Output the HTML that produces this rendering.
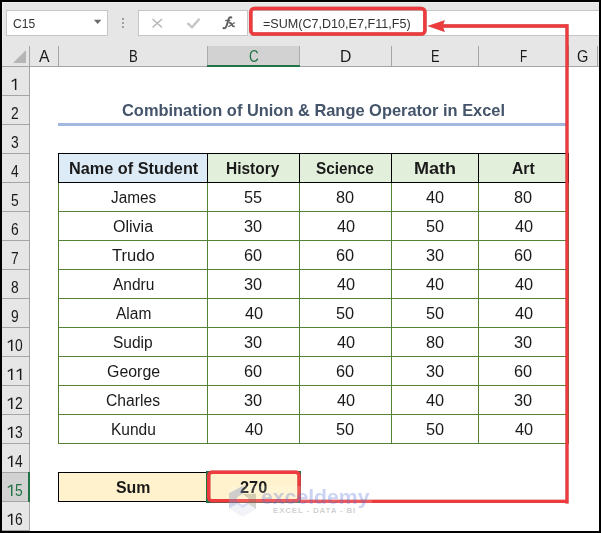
<!DOCTYPE html>
<html><head><meta charset="utf-8"><style>
html,body{margin:0;padding:0;background:#000;}
body{width:601px;height:533px;position:relative;overflow:hidden;}
</style></head><body>
<div style="position:absolute;left:0px;top:0px;width:601px;height:533px;background:#000;"></div>
<div style="position:absolute;left:2px;top:2px;width:597px;height:529px;background:#e6e6e6;"></div>
<div style="position:absolute;left:2px;top:2px;width:597px;height:1px;background:#efefef;"></div>
<div style="position:absolute;left:2px;top:2px;width:1px;height:529px;background:#efefef;"></div>
<div style="position:absolute;left:6px;top:10px;width:102px;height:26px;background:#fff;box-sizing:border-box;border:1px solid #c6c6c6"></div>
<div style="position:absolute;left:12.68px;top:4.00px;height:40px;line-height:40px;font-family:'Liberation Sans', sans-serif;font-size:13.5px;font-weight:normal;color:#333;white-space:nowrap;transform:scaleX(0.8935);transform-origin:0 0;">C15</div>
<svg style="position:absolute;left:0;top:0" width="120" height="40" viewBox="0 0 120 40"><path d="M93.9 19.8 L101.4 19.8 L97.65 24 Z" fill="#6a6a6a"/></svg>
<div style="position:absolute;left:122px;top:18px;width:2px;height:2px;background:#a0a0a0;"></div>
<div style="position:absolute;left:122px;top:22px;width:2px;height:2px;background:#a0a0a0;"></div>
<div style="position:absolute;left:122px;top:26px;width:2px;height:2px;background:#a0a0a0;"></div>
<div style="position:absolute;left:138px;top:10px;width:110px;height:26px;background:#fff;box-sizing:border-box;border:1px solid #c6c6c6"></div>
<svg style="position:absolute;left:0;top:0" width="601" height="40" viewBox="0 0 601 40"><path d="M152.5 19 L162 27.5 M162 19 L152.5 27.5" stroke="#b8b8b8" stroke-width="1.6" fill="none"/><path d="M187.5 23.2 L192 27.3 L199.5 18.8" stroke="#c6c6c6" stroke-width="2.4" fill="none" stroke-linejoin="miter"/><path d="M223.4 28.1 C224.7 28.7 225.9 27.9 226.5 26 L228.7 18.8 C229.2 17.5 230.2 17.1 231.4 17.5" stroke="#5e5e5e" stroke-width="1.9" fill="none" stroke-linecap="round"/><path d="M225.2 20.5 L230.4 20.5" stroke="#5e5e5e" stroke-width="1.3" fill="none"/><path d="M228.6 22.9 C230.5 22.3 231.5 23.5 232 25 C232.5 26.4 233.5 26.7 234.7 26.3" stroke="#5e5e5e" stroke-width="1.7" fill="none"/><path d="M234.9 22.6 L228.4 26.7" stroke="#5e5e5e" stroke-width="1.2" fill="none"/></svg>
<div style="position:absolute;left:250px;top:10px;width:349px;height:26px;background:#fff;box-sizing:border-box;border-top:1px solid #c6c6c6;border-bottom:1px solid #c6c6c6"></div>
<div style="position:absolute;left:262.68px;top:4.00px;height:40px;line-height:40px;font-family:'Liberation Sans', sans-serif;font-size:12.8px;font-weight:normal;color:#333;white-space:nowrap;transform:scaleX(0.9826);transform-origin:0 0;">=SUM(C7,D10,E7,F11,F5)</div>
<div style="position:absolute;left:2px;top:46px;width:597px;height:20px;background:#e6e6e6;"></div>
<div style="position:absolute;left:2px;top:66px;width:597px;height:1px;background:#a5a5a5;"></div>
<svg style="position:absolute;left:13px;top:50px" width="13" height="13" viewBox="0 0 13 13"><path d="M13 0 L13 13 L0 13 Z" fill="#b5b5b5"/></svg>
<div style="position:absolute;left:29px;top:46px;width:1px;height:485px;background:#a5a5a5;"></div>
<div style="position:absolute;left:207px;top:46px;width:93px;height:20px;background:#d2d2d2;"></div>
<div style="position:absolute;left:58px;top:46px;width:1px;height:20px;background:#a5a5a5;"></div>
<div style="position:absolute;left:207px;top:46px;width:1px;height:20px;background:#a5a5a5;"></div>
<div style="position:absolute;left:299px;top:46px;width:1px;height:20px;background:#a5a5a5;"></div>
<div style="position:absolute;left:391px;top:46px;width:1px;height:20px;background:#a5a5a5;"></div>
<div style="position:absolute;left:478px;top:46px;width:1px;height:20px;background:#a5a5a5;"></div>
<div style="position:absolute;left:568px;top:46px;width:1px;height:20px;background:#a5a5a5;"></div>
<div style="position:absolute;left:597px;top:46px;width:1px;height:20px;background:#a5a5a5;"></div>
<div style="position:absolute;left:207px;top:46px;width:1px;height:20px;background:#ababab;"></div>
<div style="position:absolute;left:299px;top:46px;width:1px;height:20px;background:#ababab;"></div>
<div style="position:absolute;left:207px;top:65px;width:93px;height:2px;background:#217346;"></div>
<div style="position:absolute;left:38.72px;top:36.00px;height:40px;line-height:40px;font-family:'Liberation Sans', sans-serif;font-size:16.3px;font-weight:normal;color:#1a1a1a;white-space:nowrap;transform:scaleX(0.9716);transform-origin:0 0;">A</div>
<div style="position:absolute;left:129.12px;top:36.00px;height:40px;line-height:40px;font-family:'Liberation Sans', sans-serif;font-size:16.3px;font-weight:normal;color:#1a1a1a;white-space:nowrap;transform:scaleX(0.8072);transform-origin:0 0;">B</div>
<div style="position:absolute;left:248.82px;top:36.00px;height:40px;line-height:40px;font-family:'Liberation Sans', sans-serif;font-size:16.3px;font-weight:normal;color:#217346;white-space:nowrap;transform:scaleX(0.8238);transform-origin:0 0;">C</div>
<div style="position:absolute;left:339.91px;top:36.00px;height:40px;line-height:40px;font-family:'Liberation Sans', sans-serif;font-size:16.3px;font-weight:normal;color:#1a1a1a;white-space:nowrap;transform:scaleX(0.9638);transform-origin:0 0;">D</div>
<div style="position:absolute;left:430.94px;top:36.00px;height:40px;line-height:40px;font-family:'Liberation Sans', sans-serif;font-size:16.3px;font-weight:normal;color:#1a1a1a;white-space:nowrap;transform:scaleX(0.7923);transform-origin:0 0;">E</div>
<div style="position:absolute;left:519.79px;top:36.00px;height:40px;line-height:40px;font-family:'Liberation Sans', sans-serif;font-size:16.3px;font-weight:normal;color:#1a1a1a;white-space:nowrap;transform:scaleX(0.7214);transform-origin:0 0;">F</div>
<div style="position:absolute;left:577.27px;top:36.00px;height:40px;line-height:40px;font-family:'Liberation Sans', sans-serif;font-size:16.3px;font-weight:normal;color:#1a1a1a;white-space:nowrap;transform:scaleX(0.8925);transform-origin:0 0;">G</div>
<div style="position:absolute;left:2px;top:67px;width:27px;height:464px;background:#e6e6e6;"></div>
<div style="position:absolute;left:2px;top:95px;width:27px;height:1px;background:#a5a5a5;"></div>
<div style="position:absolute;left:2px;top:124px;width:27px;height:1px;background:#a5a5a5;"></div>
<div style="position:absolute;left:2px;top:153px;width:27px;height:1px;background:#a5a5a5;"></div>
<div style="position:absolute;left:2px;top:182px;width:27px;height:1px;background:#a5a5a5;"></div>
<div style="position:absolute;left:2px;top:211px;width:27px;height:1px;background:#a5a5a5;"></div>
<div style="position:absolute;left:2px;top:240px;width:27px;height:1px;background:#a5a5a5;"></div>
<div style="position:absolute;left:2px;top:269px;width:27px;height:1px;background:#a5a5a5;"></div>
<div style="position:absolute;left:2px;top:298px;width:27px;height:1px;background:#a5a5a5;"></div>
<div style="position:absolute;left:2px;top:327px;width:27px;height:1px;background:#a5a5a5;"></div>
<div style="position:absolute;left:2px;top:356px;width:27px;height:1px;background:#a5a5a5;"></div>
<div style="position:absolute;left:2px;top:385px;width:27px;height:1px;background:#a5a5a5;"></div>
<div style="position:absolute;left:2px;top:414px;width:27px;height:1px;background:#a5a5a5;"></div>
<div style="position:absolute;left:2px;top:443px;width:27px;height:1px;background:#a5a5a5;"></div>
<div style="position:absolute;left:2px;top:472px;width:27px;height:1px;background:#a5a5a5;"></div>
<div style="position:absolute;left:2px;top:501px;width:27px;height:1px;background:#a5a5a5;"></div>
<div style="position:absolute;left:2px;top:530px;width:27px;height:1px;background:#a5a5a5;"></div>
<div style="position:absolute;left:2px;top:473px;width:27px;height:28px;background:#d2d2d2;"></div>
<div style="position:absolute;left:28px;top:472px;width:2px;height:30px;background:#217346;"></div>
<svg style="position:absolute;left:0;top:76px" width="30" height="16" viewBox="0 76 30 16"><rect x="14.90" y="78.70" width="1.45" height="11.3" fill="#1a1a1a"/><path d="M15.30 79.20 L11.70 81.60" stroke="#1a1a1a" stroke-width="1.25" fill="none"/></svg>
<div style="position:absolute;left:11.35px;top:93.00px;height:40px;line-height:40px;font-family:'Liberation Sans', sans-serif;font-size:16.3px;font-weight:normal;color:#1a1a1a;white-space:nowrap;transform:scaleX(0.8500);transform-origin:0 0;">2</div>
<div style="position:absolute;left:11.39px;top:122.00px;height:40px;line-height:40px;font-family:'Liberation Sans', sans-serif;font-size:16.3px;font-weight:normal;color:#1a1a1a;white-space:nowrap;transform:scaleX(0.8500);transform-origin:0 0;">3</div>
<div style="position:absolute;left:11.39px;top:151.00px;height:40px;line-height:40px;font-family:'Liberation Sans', sans-serif;font-size:16.3px;font-weight:normal;color:#1a1a1a;white-space:nowrap;transform:scaleX(0.8500);transform-origin:0 0;">4</div>
<div style="position:absolute;left:11.36px;top:180.00px;height:40px;line-height:40px;font-family:'Liberation Sans', sans-serif;font-size:16.3px;font-weight:normal;color:#1a1a1a;white-space:nowrap;transform:scaleX(0.8500);transform-origin:0 0;">5</div>
<div style="position:absolute;left:11.30px;top:209.00px;height:40px;line-height:40px;font-family:'Liberation Sans', sans-serif;font-size:16.3px;font-weight:normal;color:#1a1a1a;white-space:nowrap;transform:scaleX(0.8500);transform-origin:0 0;">6</div>
<div style="position:absolute;left:11.34px;top:238.00px;height:40px;line-height:40px;font-family:'Liberation Sans', sans-serif;font-size:16.3px;font-weight:normal;color:#1a1a1a;white-space:nowrap;transform:scaleX(0.8500);transform-origin:0 0;">7</div>
<div style="position:absolute;left:11.35px;top:267.00px;height:40px;line-height:40px;font-family:'Liberation Sans', sans-serif;font-size:16.3px;font-weight:normal;color:#1a1a1a;white-space:nowrap;transform:scaleX(0.8500);transform-origin:0 0;">8</div>
<div style="position:absolute;left:11.35px;top:296.00px;height:40px;line-height:40px;font-family:'Liberation Sans', sans-serif;font-size:16.3px;font-weight:normal;color:#1a1a1a;white-space:nowrap;transform:scaleX(0.8500);transform-origin:0 0;">9</div>
<svg style="position:absolute;left:0;top:337px" width="30" height="16" viewBox="0 337 30 16"><rect x="11.00" y="339.70" width="1.45" height="11.3" fill="#1a1a1a"/><path d="M11.40 340.20 L7.80 342.60" stroke="#1a1a1a" stroke-width="1.25" fill="none"/></svg>
<div style="position:absolute;left:15.05px;top:325.00px;height:40px;line-height:40px;font-family:'Liberation Sans', sans-serif;font-size:16.3px;font-weight:normal;color:#1a1a1a;white-space:nowrap;transform:scaleX(0.8500);transform-origin:0 0;">0</div>
<svg style="position:absolute;left:0;top:366px" width="30" height="16" viewBox="0 366 30 16"><rect x="11.00" y="368.70" width="1.45" height="11.3" fill="#1a1a1a"/><path d="M11.40 369.20 L7.80 371.60" stroke="#1a1a1a" stroke-width="1.25" fill="none"/></svg>
<svg style="position:absolute;left:0;top:366px" width="30" height="16" viewBox="0 366 30 16"><rect x="19.90" y="368.70" width="1.45" height="11.3" fill="#1a1a1a"/><path d="M20.30 369.20 L16.70 371.60" stroke="#1a1a1a" stroke-width="1.25" fill="none"/></svg>
<svg style="position:absolute;left:0;top:395px" width="30" height="16" viewBox="0 395 30 16"><rect x="11.00" y="397.70" width="1.45" height="11.3" fill="#1a1a1a"/><path d="M11.40 398.20 L7.80 400.60" stroke="#1a1a1a" stroke-width="1.25" fill="none"/></svg>
<div style="position:absolute;left:15.05px;top:383.00px;height:40px;line-height:40px;font-family:'Liberation Sans', sans-serif;font-size:16.3px;font-weight:normal;color:#1a1a1a;white-space:nowrap;transform:scaleX(0.8500);transform-origin:0 0;">2</div>
<svg style="position:absolute;left:0;top:424px" width="30" height="16" viewBox="0 424 30 16"><rect x="11.00" y="426.70" width="1.45" height="11.3" fill="#1a1a1a"/><path d="M11.40 427.20 L7.80 429.60" stroke="#1a1a1a" stroke-width="1.25" fill="none"/></svg>
<div style="position:absolute;left:15.09px;top:412.00px;height:40px;line-height:40px;font-family:'Liberation Sans', sans-serif;font-size:16.3px;font-weight:normal;color:#1a1a1a;white-space:nowrap;transform:scaleX(0.8500);transform-origin:0 0;">3</div>
<svg style="position:absolute;left:0;top:453px" width="30" height="16" viewBox="0 453 30 16"><rect x="11.00" y="455.70" width="1.45" height="11.3" fill="#1a1a1a"/><path d="M11.40 456.20 L7.80 458.60" stroke="#1a1a1a" stroke-width="1.25" fill="none"/></svg>
<div style="position:absolute;left:15.09px;top:441.00px;height:40px;line-height:40px;font-family:'Liberation Sans', sans-serif;font-size:16.3px;font-weight:normal;color:#1a1a1a;white-space:nowrap;transform:scaleX(0.8500);transform-origin:0 0;">4</div>
<svg style="position:absolute;left:0;top:482px" width="30" height="16" viewBox="0 482 30 16"><rect x="11.00" y="484.70" width="1.45" height="11.3" fill="#217346"/><path d="M11.40 485.20 L7.80 487.60" stroke="#217346" stroke-width="1.25" fill="none"/></svg>
<div style="position:absolute;left:15.06px;top:470.00px;height:40px;line-height:40px;font-family:'Liberation Sans', sans-serif;font-size:16.3px;font-weight:normal;color:#217346;white-space:nowrap;transform:scaleX(0.8500);transform-origin:0 0;">5</div>
<svg style="position:absolute;left:0;top:511px" width="30" height="16" viewBox="0 511 30 16"><rect x="11.00" y="513.70" width="1.45" height="11.3" fill="#1a1a1a"/><path d="M11.40 514.20 L7.80 516.60" stroke="#1a1a1a" stroke-width="1.25" fill="none"/></svg>
<div style="position:absolute;left:15.00px;top:499.00px;height:40px;line-height:40px;font-family:'Liberation Sans', sans-serif;font-size:16.3px;font-weight:normal;color:#1a1a1a;white-space:nowrap;transform:scaleX(0.8500);transform-origin:0 0;">6</div>
<div style="position:absolute;left:30px;top:67px;width:569px;height:464px;background:#fff;"></div>
<div style="position:absolute;left:597px;top:46px;width:1px;height:21px;background:#a5a5a5;"></div>
<div style="position:absolute;left:58px;top:123px;width:510px;height:3px;background:#a2b8e1;"></div>
<div style="position:absolute;left:122.13px;top:91.00px;height:40px;line-height:40px;font-family:'Liberation Sans', sans-serif;font-size:17px;font-weight:bold;color:#44546a;white-space:nowrap;transform:scaleX(0.9656);transform-origin:0 0;">Combination of Union &amp; Range Operator in Excel</div>
<div style="position:absolute;left:59px;top:154px;width:148px;height:28px;background:#ddebf7;"></div>
<div style="position:absolute;left:208px;top:154px;width:91px;height:28px;background:#e2efda;"></div>
<div style="position:absolute;left:300px;top:154px;width:91px;height:28px;background:#e2efda;"></div>
<div style="position:absolute;left:392px;top:154px;width:86px;height:28px;background:#e2efda;"></div>
<div style="position:absolute;left:479px;top:154px;width:89px;height:28px;background:#e2efda;"></div>
<div style="position:absolute;left:58px;top:211px;width:511px;height:1px;background:#548235;"></div>
<div style="position:absolute;left:58px;top:240px;width:511px;height:1px;background:#548235;"></div>
<div style="position:absolute;left:58px;top:269px;width:511px;height:1px;background:#548235;"></div>
<div style="position:absolute;left:58px;top:298px;width:511px;height:1px;background:#548235;"></div>
<div style="position:absolute;left:58px;top:327px;width:511px;height:1px;background:#548235;"></div>
<div style="position:absolute;left:58px;top:356px;width:511px;height:1px;background:#548235;"></div>
<div style="position:absolute;left:58px;top:385px;width:511px;height:1px;background:#548235;"></div>
<div style="position:absolute;left:58px;top:414px;width:511px;height:1px;background:#548235;"></div>
<div style="position:absolute;left:58px;top:443px;width:511px;height:1px;background:#548235;"></div>
<div style="position:absolute;left:58px;top:182px;width:1px;height:262px;background:#548235;"></div>
<div style="position:absolute;left:207px;top:182px;width:1px;height:262px;background:#548235;"></div>
<div style="position:absolute;left:299px;top:182px;width:1px;height:262px;background:#548235;"></div>
<div style="position:absolute;left:391px;top:182px;width:1px;height:262px;background:#548235;"></div>
<div style="position:absolute;left:478px;top:182px;width:1px;height:262px;background:#548235;"></div>
<div style="position:absolute;left:568px;top:182px;width:1px;height:262px;background:#548235;"></div>
<div style="position:absolute;left:58px;top:153px;width:511px;height:1px;background:#000;"></div>
<div style="position:absolute;left:58px;top:182px;width:511px;height:1px;background:#000;"></div>
<div style="position:absolute;left:58px;top:153px;width:1px;height:30px;background:#000;"></div>
<div style="position:absolute;left:207px;top:153px;width:1px;height:30px;background:#000;"></div>
<div style="position:absolute;left:299px;top:153px;width:1px;height:30px;background:#000;"></div>
<div style="position:absolute;left:391px;top:153px;width:1px;height:30px;background:#000;"></div>
<div style="position:absolute;left:478px;top:153px;width:1px;height:30px;background:#000;"></div>
<div style="position:absolute;left:568px;top:153px;width:1px;height:30px;background:#000;"></div>
<div style="position:absolute;left:68.91px;top:149.00px;height:40px;line-height:40px;font-family:'Liberation Sans', sans-serif;font-size:16px;font-weight:bold;color:#1a1a1a;white-space:nowrap;transform:scaleX(1.0170);transform-origin:0 0;">Name of Student</div>
<div style="position:absolute;left:226.36px;top:149.00px;height:40px;line-height:40px;font-family:'Liberation Sans', sans-serif;font-size:16px;font-weight:bold;color:#1a1a1a;white-space:nowrap;transform:scaleX(0.9672);transform-origin:0 0;">History</div>
<div style="position:absolute;left:316.46px;top:149.00px;height:40px;line-height:40px;font-family:'Liberation Sans', sans-serif;font-size:16px;font-weight:bold;color:#1a1a1a;white-space:nowrap;transform:scaleX(0.9568);transform-origin:0 0;">Science</div>
<div style="position:absolute;left:414.39px;top:149.00px;height:40px;line-height:40px;font-family:'Liberation Sans', sans-serif;font-size:16px;font-weight:bold;color:#1a1a1a;white-space:nowrap;transform:scaleX(1.1258);transform-origin:0 0;">Math</div>
<div style="position:absolute;left:512.01px;top:149.00px;height:40px;line-height:40px;font-family:'Liberation Sans', sans-serif;font-size:16px;font-weight:bold;color:#1a1a1a;white-space:nowrap;transform:scaleX(0.9817);transform-origin:0 0;">Art</div>
<div style="position:absolute;left:110.55px;top:178.00px;height:40px;line-height:40px;font-family:'Liberation Sans', sans-serif;font-size:16px;font-weight:normal;color:#1a1a1a;white-space:nowrap;transform:scaleX(0.9592);transform-origin:0 0;">James</div>
<div style="position:absolute;left:244.44px;top:178.00px;height:40px;line-height:40px;font-family:'Liberation Sans', sans-serif;font-size:16px;font-weight:normal;color:#1a1a1a;white-space:nowrap;transform:scaleX(1.0200);transform-origin:0 0;">55</div>
<div style="position:absolute;left:336.39px;top:178.00px;height:40px;line-height:40px;font-family:'Liberation Sans', sans-serif;font-size:16px;font-weight:normal;color:#1a1a1a;white-space:nowrap;transform:scaleX(1.0200);transform-origin:0 0;">80</div>
<div style="position:absolute;left:426.06px;top:178.00px;height:40px;line-height:40px;font-family:'Liberation Sans', sans-serif;font-size:16px;font-weight:normal;color:#1a1a1a;white-space:nowrap;transform:scaleX(1.0200);transform-origin:0 0;">40</div>
<div style="position:absolute;left:514.39px;top:178.00px;height:40px;line-height:40px;font-family:'Liberation Sans', sans-serif;font-size:16px;font-weight:normal;color:#1a1a1a;white-space:nowrap;transform:scaleX(1.0200);transform-origin:0 0;">80</div>
<div style="position:absolute;left:112.95px;top:207.00px;height:40px;line-height:40px;font-family:'Liberation Sans', sans-serif;font-size:16px;font-weight:normal;color:#1a1a1a;white-space:nowrap;transform:scaleX(1.0013);transform-origin:0 0;">Olivia</div>
<div style="position:absolute;left:244.43px;top:207.00px;height:40px;line-height:40px;font-family:'Liberation Sans', sans-serif;font-size:16px;font-weight:normal;color:#1a1a1a;white-space:nowrap;transform:scaleX(1.0200);transform-origin:0 0;">30</div>
<div style="position:absolute;left:336.56px;top:207.00px;height:40px;line-height:40px;font-family:'Liberation Sans', sans-serif;font-size:16px;font-weight:normal;color:#1a1a1a;white-space:nowrap;transform:scaleX(1.0200);transform-origin:0 0;">40</div>
<div style="position:absolute;left:425.92px;top:207.00px;height:40px;line-height:40px;font-family:'Liberation Sans', sans-serif;font-size:16px;font-weight:normal;color:#1a1a1a;white-space:nowrap;transform:scaleX(1.0200);transform-origin:0 0;">50</div>
<div style="position:absolute;left:514.56px;top:207.00px;height:40px;line-height:40px;font-family:'Liberation Sans', sans-serif;font-size:16px;font-weight:normal;color:#1a1a1a;white-space:nowrap;transform:scaleX(1.0200);transform-origin:0 0;">40</div>
<div style="position:absolute;left:112.24px;top:236.00px;height:40px;line-height:40px;font-family:'Liberation Sans', sans-serif;font-size:16px;font-weight:normal;color:#1a1a1a;white-space:nowrap;transform:scaleX(1.0354);transform-origin:0 0;">Trudo</div>
<div style="position:absolute;left:244.33px;top:236.00px;height:40px;line-height:40px;font-family:'Liberation Sans', sans-serif;font-size:16px;font-weight:normal;color:#1a1a1a;white-space:nowrap;transform:scaleX(1.0200);transform-origin:0 0;">60</div>
<div style="position:absolute;left:336.33px;top:236.00px;height:40px;line-height:40px;font-family:'Liberation Sans', sans-serif;font-size:16px;font-weight:normal;color:#1a1a1a;white-space:nowrap;transform:scaleX(1.0200);transform-origin:0 0;">60</div>
<div style="position:absolute;left:425.93px;top:236.00px;height:40px;line-height:40px;font-family:'Liberation Sans', sans-serif;font-size:16px;font-weight:normal;color:#1a1a1a;white-space:nowrap;transform:scaleX(1.0200);transform-origin:0 0;">30</div>
<div style="position:absolute;left:514.33px;top:236.00px;height:40px;line-height:40px;font-family:'Liberation Sans', sans-serif;font-size:16px;font-weight:normal;color:#1a1a1a;white-space:nowrap;transform:scaleX(1.0200);transform-origin:0 0;">60</div>
<div style="position:absolute;left:113.09px;top:265.00px;height:40px;line-height:40px;font-family:'Liberation Sans', sans-serif;font-size:16px;font-weight:normal;color:#1a1a1a;white-space:nowrap;transform:scaleX(0.9700);transform-origin:0 0;">Andru</div>
<div style="position:absolute;left:244.43px;top:265.00px;height:40px;line-height:40px;font-family:'Liberation Sans', sans-serif;font-size:16px;font-weight:normal;color:#1a1a1a;white-space:nowrap;transform:scaleX(1.0200);transform-origin:0 0;">30</div>
<div style="position:absolute;left:336.56px;top:265.00px;height:40px;line-height:40px;font-family:'Liberation Sans', sans-serif;font-size:16px;font-weight:normal;color:#1a1a1a;white-space:nowrap;transform:scaleX(1.0200);transform-origin:0 0;">40</div>
<div style="position:absolute;left:426.06px;top:265.00px;height:40px;line-height:40px;font-family:'Liberation Sans', sans-serif;font-size:16px;font-weight:normal;color:#1a1a1a;white-space:nowrap;transform:scaleX(1.0200);transform-origin:0 0;">40</div>
<div style="position:absolute;left:514.56px;top:265.00px;height:40px;line-height:40px;font-family:'Liberation Sans', sans-serif;font-size:16px;font-weight:normal;color:#1a1a1a;white-space:nowrap;transform:scaleX(1.0200);transform-origin:0 0;">40</div>
<div style="position:absolute;left:116.12px;top:294.00px;height:40px;line-height:40px;font-family:'Liberation Sans', sans-serif;font-size:16px;font-weight:normal;color:#1a1a1a;white-space:nowrap;transform:scaleX(0.9700);transform-origin:0 0;">Alam</div>
<div style="position:absolute;left:244.56px;top:294.00px;height:40px;line-height:40px;font-family:'Liberation Sans', sans-serif;font-size:16px;font-weight:normal;color:#1a1a1a;white-space:nowrap;transform:scaleX(1.0200);transform-origin:0 0;">40</div>
<div style="position:absolute;left:336.42px;top:294.00px;height:40px;line-height:40px;font-family:'Liberation Sans', sans-serif;font-size:16px;font-weight:normal;color:#1a1a1a;white-space:nowrap;transform:scaleX(1.0200);transform-origin:0 0;">50</div>
<div style="position:absolute;left:425.92px;top:294.00px;height:40px;line-height:40px;font-family:'Liberation Sans', sans-serif;font-size:16px;font-weight:normal;color:#1a1a1a;white-space:nowrap;transform:scaleX(1.0200);transform-origin:0 0;">50</div>
<div style="position:absolute;left:514.56px;top:294.00px;height:40px;line-height:40px;font-family:'Liberation Sans', sans-serif;font-size:16px;font-weight:normal;color:#1a1a1a;white-space:nowrap;transform:scaleX(1.0200);transform-origin:0 0;">40</div>
<div style="position:absolute;left:113.43px;top:323.00px;height:40px;line-height:40px;font-family:'Liberation Sans', sans-serif;font-size:16px;font-weight:normal;color:#1a1a1a;white-space:nowrap;transform:scaleX(0.9700);transform-origin:0 0;">Sudip</div>
<div style="position:absolute;left:244.43px;top:323.00px;height:40px;line-height:40px;font-family:'Liberation Sans', sans-serif;font-size:16px;font-weight:normal;color:#1a1a1a;white-space:nowrap;transform:scaleX(1.0200);transform-origin:0 0;">30</div>
<div style="position:absolute;left:336.56px;top:323.00px;height:40px;line-height:40px;font-family:'Liberation Sans', sans-serif;font-size:16px;font-weight:normal;color:#1a1a1a;white-space:nowrap;transform:scaleX(1.0200);transform-origin:0 0;">40</div>
<div style="position:absolute;left:425.89px;top:323.00px;height:40px;line-height:40px;font-family:'Liberation Sans', sans-serif;font-size:16px;font-weight:normal;color:#1a1a1a;white-space:nowrap;transform:scaleX(1.0200);transform-origin:0 0;">80</div>
<div style="position:absolute;left:514.43px;top:323.00px;height:40px;line-height:40px;font-family:'Liberation Sans', sans-serif;font-size:16px;font-weight:normal;color:#1a1a1a;white-space:nowrap;transform:scaleX(1.0200);transform-origin:0 0;">30</div>
<div style="position:absolute;left:106.80px;top:352.00px;height:40px;line-height:40px;font-family:'Liberation Sans', sans-serif;font-size:16px;font-weight:normal;color:#1a1a1a;white-space:nowrap;transform:scaleX(0.9951);transform-origin:0 0;">George</div>
<div style="position:absolute;left:244.33px;top:352.00px;height:40px;line-height:40px;font-family:'Liberation Sans', sans-serif;font-size:16px;font-weight:normal;color:#1a1a1a;white-space:nowrap;transform:scaleX(1.0200);transform-origin:0 0;">60</div>
<div style="position:absolute;left:336.33px;top:352.00px;height:40px;line-height:40px;font-family:'Liberation Sans', sans-serif;font-size:16px;font-weight:normal;color:#1a1a1a;white-space:nowrap;transform:scaleX(1.0200);transform-origin:0 0;">60</div>
<div style="position:absolute;left:425.93px;top:352.00px;height:40px;line-height:40px;font-family:'Liberation Sans', sans-serif;font-size:16px;font-weight:normal;color:#1a1a1a;white-space:nowrap;transform:scaleX(1.0200);transform-origin:0 0;">30</div>
<div style="position:absolute;left:514.33px;top:352.00px;height:40px;line-height:40px;font-family:'Liberation Sans', sans-serif;font-size:16px;font-weight:normal;color:#1a1a1a;white-space:nowrap;transform:scaleX(1.0200);transform-origin:0 0;">60</div>
<div style="position:absolute;left:106.20px;top:381.00px;height:40px;line-height:40px;font-family:'Liberation Sans', sans-serif;font-size:16px;font-weight:normal;color:#1a1a1a;white-space:nowrap;transform:scaleX(0.9787);transform-origin:0 0;">Charles</div>
<div style="position:absolute;left:244.43px;top:381.00px;height:40px;line-height:40px;font-family:'Liberation Sans', sans-serif;font-size:16px;font-weight:normal;color:#1a1a1a;white-space:nowrap;transform:scaleX(1.0200);transform-origin:0 0;">30</div>
<div style="position:absolute;left:336.56px;top:381.00px;height:40px;line-height:40px;font-family:'Liberation Sans', sans-serif;font-size:16px;font-weight:normal;color:#1a1a1a;white-space:nowrap;transform:scaleX(1.0200);transform-origin:0 0;">40</div>
<div style="position:absolute;left:426.06px;top:381.00px;height:40px;line-height:40px;font-family:'Liberation Sans', sans-serif;font-size:16px;font-weight:normal;color:#1a1a1a;white-space:nowrap;transform:scaleX(1.0200);transform-origin:0 0;">40</div>
<div style="position:absolute;left:514.43px;top:381.00px;height:40px;line-height:40px;font-family:'Liberation Sans', sans-serif;font-size:16px;font-weight:normal;color:#1a1a1a;white-space:nowrap;transform:scaleX(1.0200);transform-origin:0 0;">30</div>
<div style="position:absolute;left:110.74px;top:410.00px;height:40px;line-height:40px;font-family:'Liberation Sans', sans-serif;font-size:16px;font-weight:normal;color:#1a1a1a;white-space:nowrap;transform:scaleX(0.9700);transform-origin:0 0;">Kundu</div>
<div style="position:absolute;left:244.56px;top:410.00px;height:40px;line-height:40px;font-family:'Liberation Sans', sans-serif;font-size:16px;font-weight:normal;color:#1a1a1a;white-space:nowrap;transform:scaleX(1.0200);transform-origin:0 0;">40</div>
<div style="position:absolute;left:336.42px;top:410.00px;height:40px;line-height:40px;font-family:'Liberation Sans', sans-serif;font-size:16px;font-weight:normal;color:#1a1a1a;white-space:nowrap;transform:scaleX(1.0200);transform-origin:0 0;">50</div>
<div style="position:absolute;left:425.92px;top:410.00px;height:40px;line-height:40px;font-family:'Liberation Sans', sans-serif;font-size:16px;font-weight:normal;color:#1a1a1a;white-space:nowrap;transform:scaleX(1.0200);transform-origin:0 0;">50</div>
<div style="position:absolute;left:514.56px;top:410.00px;height:40px;line-height:40px;font-family:'Liberation Sans', sans-serif;font-size:16px;font-weight:normal;color:#1a1a1a;white-space:nowrap;transform:scaleX(1.0200);transform-origin:0 0;">40</div>
<div style="position:absolute;left:58px;top:472px;width:150px;height:30px;background:#fff2cc;box-sizing:border-box;border:1px solid #000"></div>
<div style="position:absolute;left:207px;top:472px;width:93px;height:30px;background:#fff2cc;box-sizing:border-box;border:1px solid #548235"></div>
<div style="position:absolute;left:206px;top:471px;width:95px;height:32px;background:transparent;box-sizing:border-box;border:2px solid #217346"></div>
<div style="position:absolute;left:115.79px;top:468.00px;height:40px;line-height:40px;font-family:'Liberation Sans', sans-serif;font-size:16px;font-weight:bold;color:#1a1a1a;white-space:nowrap;transform:scaleX(0.9920);transform-origin:0 0;">Sum</div>
<div style="position:absolute;left:240.13px;top:468.00px;height:40px;line-height:40px;font-family:'Liberation Sans', sans-serif;font-size:16px;font-weight:bold;color:#1a1a1a;white-space:nowrap;transform:scaleX(1.0207);transform-origin:0 0;">270</div>
<svg style="position:absolute;left:0;top:0;filter:drop-shadow(0.5px 0.7px 0.5px rgba(0,0,0,0.35))" width="601" height="533" viewBox="0 0 601 533"><rect x="250.8" y="8.5" width="174.1" height="25.4" rx="3.4" ry="3.4" fill="none" stroke="#ee3b3e" stroke-width="3.5"/><rect x="208.7" y="472.2" width="90.4" height="28.6" rx="3.2" ry="3.2" fill="none" stroke="#ee3b3e" stroke-width="3.4"/><path d="M442 26 L567 26" fill="none" stroke="#ee3b3e" stroke-width="3.3"/><path d="M567 24.2 L567 503.6" fill="none" stroke="#ee3b3e" stroke-width="3.2"/><path d="M300 501.3 L567 501.3" fill="none" stroke="#ee3b3e" stroke-width="3.2"/><path d="M427.6 26 L444.8 20.2 L442.6 26 L444.8 32 Z" fill="#ee3b3e"/></svg>
<svg style="position:absolute;left:0;top:0" width="601" height="533" viewBox="0 0 601 533"><rect x="229" y="486" width="143" height="32" fill="rgba(255,255,255,0.15)"/><path d="M229 493.3 L242.6 486 L242.6 494 L237 497.5 L237 504 L229 508.5 Z" fill="rgba(100,120,190,0.30)"/><path d="M242.6 494 L256 493.8 L256 509 L248.5 504 L248.5 498.5 Z" fill="rgba(120,120,100,0.30)"/><path d="M237 504 L242.6 508 L248.5 504 L248.5 502 L242.6 505 L237 502 Z" fill="rgba(90,120,220,0.25)"/><path d="M229 508.5 L237 504 L242.6 508 L248.5 504 L256 509 L242.6 517 Z" fill="rgba(190,200,225,0.22)"/></svg>
<div style="position:absolute;left:261.2px;top:477px;height:40px;line-height:40px;font-family:'Liberation Sans', sans-serif;font-size:21px;font-weight:bold;color:rgba(80,110,215,0.30);white-space:nowrap;transform:scaleX(1.01);transform-origin:0 0">exceldemy</div>
<div style="position:absolute;left:273px;top:501px;height:20px;line-height:20px;font-family:'Liberation Sans', sans-serif;font-size:8px;font-weight:bold;color:rgba(120,120,120,0.36);letter-spacing:0.8px;white-space:nowrap">EXCEL - DATA - BI</div>
</body></html>
